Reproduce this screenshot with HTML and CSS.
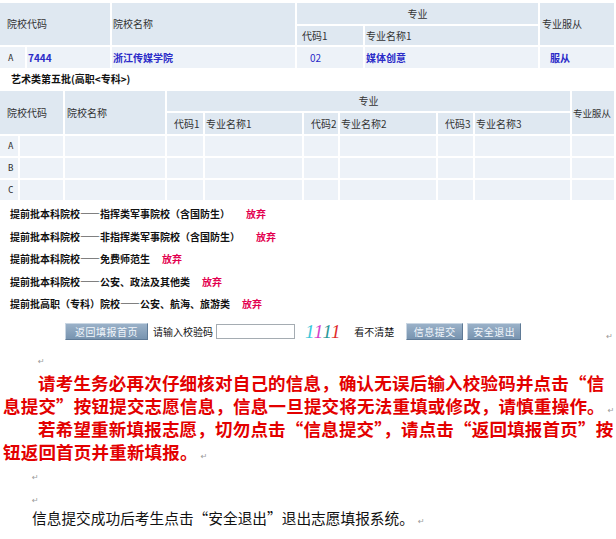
FILE: index.html
```html
<!DOCTYPE html>
<html lang="zh-CN">
<head>
<meta charset="utf-8">
<title>志愿信息确认</title>
<link rel="stylesheet" href="styles.css">
</head>
<body>
<div class="page">
  <table class="grid t1">
    <colgroup>
      <col class="a1"><col class="a2"><col class="a3"><col class="a4"><col class="a5"><col class="a6">
    </colgroup>
    <tr class="h1">
      <th colspan="2" rowspan="2" class="first">院校代码</th>
      <th rowspan="2">院校名称</th>
      <th colspan="2" class="center">专业</th>
      <th rowspan="2" class="obey">专业服从</th>
    </tr>
    <tr class="h2">
      <th class="code">代码1</th>
      <th>专业名称1</th>
    </tr>
    <tr class="data">
      <td class="letter">A</td>
      <td class="val">7444</td>
      <td class="val">浙江传媒学院</td>
      <td class="val code2">02</td>
      <td class="val">媒体创意</td>
      <td class="val obeyv">服从</td>
    </tr>
  </table>

  <div class="batch">艺术类第五批(高职&lt;专科&gt;)</div>

  <table class="grid t2">
    <colgroup>
      <col class="b1"><col class="b2"><col class="b3"><col class="b4"><col class="b5"><col class="b6"><col class="b7"><col class="b8"><col class="b9"><col class="b10">
    </colgroup>
    <tr class="h1">
      <th colspan="2" rowspan="2" class="first">院校代码</th>
      <th rowspan="2" class="name">院校名称</th>
      <th colspan="6" class="center">专业</th>
      <th rowspan="2" class="obey tight">专业服从</th>
    </tr>
    <tr class="h2">
      <th class="code">代码1</th>
      <th>专业名称1</th>
      <th class="code">代码2</th>
      <th>专业名称2</th>
      <th class="code">代码3</th>
      <th>专业名称3</th>
    </tr>
    <tr class="data"><td class="letter">A</td><td></td><td></td><td></td><td></td><td></td><td></td><td></td><td></td><td></td></tr>
    <tr class="data"><td class="letter">B</td><td></td><td></td><td></td><td></td><td></td><td></td><td></td><td></td><td></td></tr>
    <tr class="data"><td class="letter">C</td><td></td><td></td><td></td><td></td><td></td><td></td><td></td><td></td><td></td></tr>
  </table>

  <ul class="choices">
    <li>提前批本科院校——指挥类军事院校（含国防生）<span class="giveup g16">放弃</span></li>
    <li>提前批本科院校——非指挥类军事院校（含国防生）<span class="giveup g16">放弃</span></li>
    <li>提前批本科院校——免费师范生<span class="giveup">放弃</span></li>
    <li>提前批本科院校——公安、政法及其他类<span class="giveup">放弃</span></li>
    <li>提前批高职（专科）院校——公安、航海、旅游类<span class="giveup">放弃</span></li>
  </ul>

  <div class="actions">
    <span class="btn btn-back">返回填报首页</span>
    <span class="label">请输入校验码</span>
    <input class="code-input" type="text">
    <span class="captcha"><span class="d1">1</span><span class="d2">1</span><span class="d3">1</span><span class="d4">1</span></span>
    <span class="label unclear">看不清楚</span>
    <span class="btn btn-submit">信息提交</span>
    <span class="btn btn-exit">安全退出</span>
    <span class="pm pm-end">↵</span>
  </div>

  <div class="doc">
    <p class="blank indent"><span class="pm">↵</span></p>
    <p class="warn">请考生务必再次仔细核对自己的信息，确认无误后输入校验码并点击“信<br>息提交”按钮提交志愿信息，信息一旦提交将无法重填或修改，请慎重操作。<span class="pm">↵</span></p>
    <p class="warn">若希望重新填报志愿，切勿点击“信息提交”，请点击“返回填报首页”按<br>钮返回首页并重新填报。<span class="pm">↵</span></p>
    <p class="blank tail"><span class="pm">↵</span></p>
    <p class="blank tail"><span class="pm">↵</span></p>
    <p class="final">信息提交成功后考生点击“安全退出”退出志愿填报系统。<span class="pm">↵</span></p>
  </div>
</div>
</body>
</html>
```

FILE: styles.css
```css
html, body {
  margin: 0;
  padding: 0;
  background: #ffffff;
}

body {
  width: 616px;
  height: 539px;
  overflow: hidden;
  font-family: "Noto Sans CJK SC", "DejaVu Sans", sans-serif;
  font-size: 10px;
  color: #222;
}

.page {
  width: 616px;
}

/* ---------- tables ---------- */
.grid {
  table-layout: fixed;
  border-collapse: separate;
  border-spacing: 2px;
  width: 618px;
  margin-left: -2px;
}

.grid th,
.grid td {
  padding: 0 0 0 1px;
  font-weight: normal;
  text-align: left;
  vertical-align: middle;
  white-space: nowrap;
  overflow: hidden;
  line-height: 12px;
}

.grid th {
  background: #dfe8f1;
  color: #333;
}

.grid td {
  background: #edf2f8;
}

.grid th.first { padding-left: 7px; }
.grid th.center { text-align: center; padding-left: 0; }
.grid th.obey { padding-left: 2px; }
.grid th.obey.tight { padding-left: 1px; font-size: 9.6px; letter-spacing: -0.2px; }
.grid th.code { padding-left: 5px; }

.t1 { margin-top: 1px; }
.t1 .a1 { width: 25px; }
.t1 .a2 { width: 83px; }
.t1 .a3 { width: 183px; }
.t1 .a4 { width: 66px; }
.t1 .a5 { width: 173px; }
.t1 .a6 { width: 74px; }

.t1 .h1 th { height: 21px; }
.t1 .h2 th { height: 19px; }
.t1 .data td { height: 21px; }

.grid td.letter {
  padding-left: 8px;
  font-family: "DejaVu Sans Mono", monospace;
  font-size: 9px;
  color: #333;
}

.t1 td.val {
  color: #2b2bc8;
  font-weight: bold;
}
.t1 td.code2 { padding-left: 13px; font-weight: normal; }
.t1 td.obeyv { padding-left: 10px; }

.batch {
  margin: 2px 0 0 11px;
  height: 14px;
  line-height: 14px;
  font-weight: bold;
  color: #111;
}

.t2 { margin-top: 3px; }
.t2 .b1 { width: 18px; }
.t2 .b2 { width: 43px; }
.t2 .b3 { width: 100px; }
.t2 .b4 { width: 36px; }
.t2 .b5 { width: 97px; }
.t2 .b6 { width: 34px; }
.t2 .b7 { width: 96px; }
.t2 .b8 { width: 35px; }
.t2 .b9 { width: 95px; }
.t2 .b10 { width: 42px; }

.t2 .h1 th { height: 20px; }
.t2 .h2 th { height: 21px; }
.t2 .data td { height: 20px; }
.t2 th.code { padding-left: 7px; }
.t2 th.name { padding-left: 2px; }

/* ---------- choice list ---------- */
.choices {
  list-style: none;
  margin: 1px 0 0 0;
  padding: 0 0 0 10px;
}

.choices li {
  height: 22.5px;
  line-height: 22.5px;
  font-weight: bold;
  color: #111;
}

.giveup {
  color: #e3004f;
  margin-left: 12px;
}
.giveup.g16 { margin-left: 16px; }

/* ---------- actions ---------- */
.actions {
  display: flex;
  align-items: center;
  height: 19px;
  margin-top: 6px;
  padding-left: 65px;
  padding-right: 3px;
}

.btn {
  display: flex;
  align-items: center;
  justify-content: center;
  height: 15px;
  box-sizing: content-box;
  border: 1px solid;
  border-color: #c9d6e3 #5f7a96 #5f7a96 #c9d6e3;
  background: linear-gradient(#9ab1c8, #7894b0);
  color: #f2f7fc;
  font-size: 10px;
  letter-spacing: 0.5px;
}

.btn-back { width: 81px; }
.btn-submit { width: 55px; margin-left: 12px; }
.btn-exit { width: 52px; margin-left: 4px; }

.label {
  margin-left: 5px;
  color: #111;
}

.code-input {
  width: 79px;
  height: 15px;
  box-sizing: border-box;
  margin: 0 0 0 3px;
  padding: 0;
  border: 1px solid #a5acb2;
  background: #fff;
}

.captcha {
  margin-left: 10px;
  font-family: "Liberation Serif", serif;
  font-style: italic;
  font-size: 19px;
  line-height: 19px;
  letter-spacing: 0.6px;
}
.captcha .d1 { color: #3cc8da; }
.captcha .d2 { color: #d23fcb; }
.captcha .d3 { color: #2a9898; }
.captcha .d4 { color: #e02b2b; }

.label.unclear { margin-left: 13px; }

.pm {
  font-family: "DejaVu Sans", sans-serif;
  font-size: 8px;
  line-height: 1;
  font-weight: normal;
  letter-spacing: 0;
  color: #9a9a9a;
}

.pm-end {
  margin-left: auto;
  align-self: flex-end;
}

/* ---------- document text ---------- */
.doc {
  padding-left: 3px;
  margin-top: 8px;
}

.doc p {
  margin: 0;
  white-space: nowrap;
}

.blank {
  height: 22px;
  line-height: 22px;
}
.blank.indent { padding-left: 35px; }
.blank.tail { height: 23.5px; line-height: 23.5px; padding-left: 29px; }

.warn {
  font-size: 17.5px;
  line-height: 23.3px;
  font-weight: bold;
  color: #e30000;
  text-indent: 2em;
  letter-spacing: 0.2px;
}

.warn .pm { margin-left: 3px; }

.final {
  padding-left: 29px;
  font-size: 14.7px;
  line-height: 14px;
  color: #111;
}
.final .pm { margin-left: 4px; }
```
